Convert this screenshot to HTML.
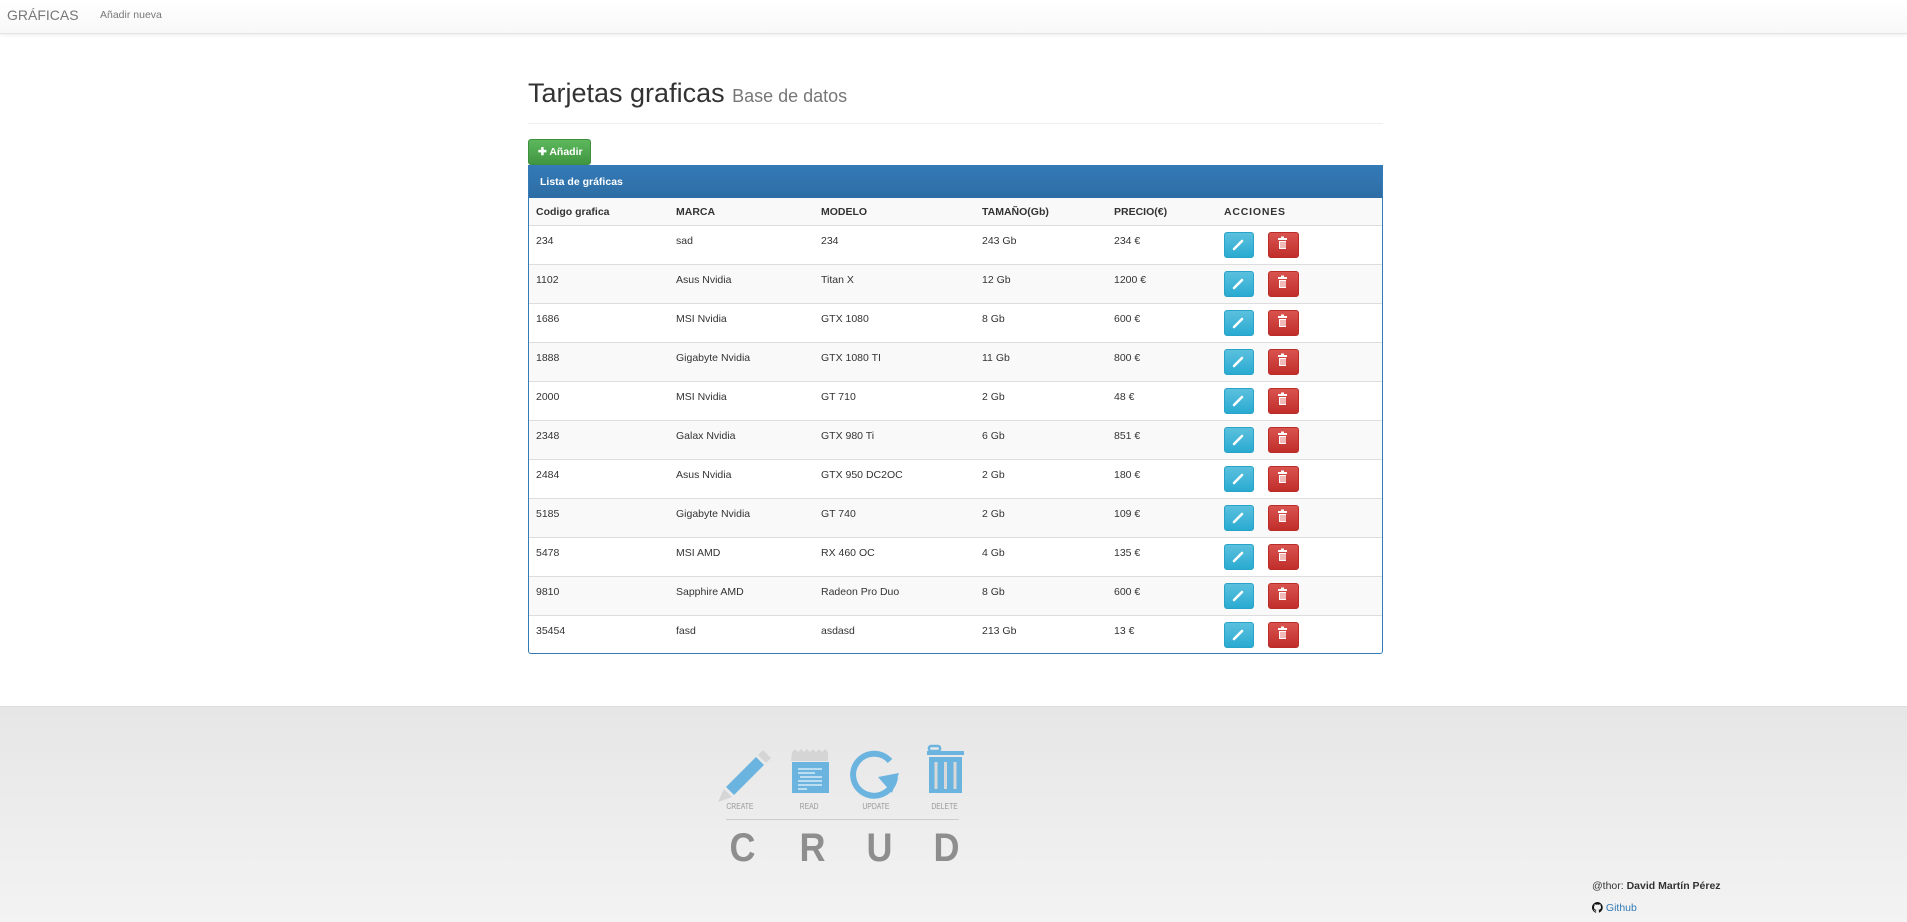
<!DOCTYPE html>
<html><head><meta charset="utf-8">
<style>
*{box-sizing:border-box;margin:0;padding:0}
body{width:1907px;height:922px;overflow:hidden;background:#fff;font-family:"Liberation Sans",Arial,sans-serif;font-size:10.5px;color:#333;position:relative}
.nav{position:absolute;left:0;top:0;width:1907px;height:34px;background:linear-gradient(#fff,#f8f8f8);border-bottom:1px solid #e4e4e4;box-shadow:0 1px 4px rgba(0,0,0,.08)}
.brand{position:absolute;left:7px;top:7px;font-size:14px;color:#777}
.navl{position:absolute;left:100px;top:9px;font-size:10.5px;color:#777}
h1{position:absolute;left:528px;top:78px;font-size:27px;font-weight:normal;color:#333;white-space:nowrap}
h1 small{font-size:18px;color:#777}
.hr{position:absolute;left:528px;top:123px;width:855px;height:1px;background:#eee}
.add{position:absolute;left:528px;top:139px;width:63px;height:26px;border-radius:3px;background:linear-gradient(#5cb85c,#419641);border:1px solid #3e8f3e;color:#fff;font-weight:bold;font-size:10.5px;line-height:24px;padding-left:9px}
.panel{position:absolute;left:528px;top:165px;width:855px;height:489px;border:1px solid #337ab7;border-radius:0 0 3px 3px;overflow:hidden}
.ph{height:32px;background:linear-gradient(#337ab7,#2e6da4);color:#fff;font-weight:bold;padding-left:11px;line-height:32px}
.row{position:relative;height:39px;border-top:1px solid #ddd}
.row.h{height:27px;border-top:none;font-weight:bold;background:#f9f9f9}
.row.g{background:#f9f9f9}
.row span{position:absolute;top:9px}
.row.h span{top:8px}
.b{position:absolute;top:6px;height:26px;border-radius:3px}
.e{left:695px;width:30px;background:linear-gradient(#5bc0de,#2aabd2);border:1px solid #28a4c9}
.d{left:739px;width:31px;background:linear-gradient(#d9534f,#c12e2a);border:1px solid #b92c28}
.foot{position:absolute;left:0;top:706px;width:1907px;height:216px;background:linear-gradient(#e6e6e6,#f3f3f3);border-top:1px solid #ddd}
.lbl{position:absolute;top:802px;font-size:8px;color:#999;transform:scaleX(.85)}
.big{position:absolute;top:826px;font-size:40px;font-weight:bold;color:#8e8e8e;transform:scaleX(.9)}
</style></head><body>
<div class="nav"><div class="brand">GRÁFICAS</div><div class="navl">Añadir nueva</div></div>
<h1>Tarjetas graficas <small>Base de datos</small></h1>
<div class="hr"></div>
<div class="add">✚ Añadir</div>
<div class="panel">
<div class="ph">Lista de gráficas</div>
<div class="row h"><span style="left:7px">Codigo grafica</span><span style="left:147px">MARCA</span><span style="left:292px">MODELO</span><span style="left:453px">TAMAÑO(Gb)</span><span style="left:585px">PRECIO(€)</span><span style="left:695px;letter-spacing:.8px">ACCIONES</span></div>
<div class="row"><span style="left:7px">234</span><span style="left:147px">sad</span><span style="left:292px">234</span><span style="left:453px">243 Gb</span><span style="left:585px">234 €</span><i class="b e"></i><i class="b d"></i></div>
<div class="row g"><span style="left:7px">1102</span><span style="left:147px">Asus Nvidia</span><span style="left:292px">Titan X</span><span style="left:453px">12 Gb</span><span style="left:585px">1200 €</span><i class="b e"></i><i class="b d"></i></div>
<div class="row"><span style="left:7px">1686</span><span style="left:147px">MSI Nvidia</span><span style="left:292px">GTX 1080</span><span style="left:453px">8 Gb</span><span style="left:585px">600 €</span><i class="b e"></i><i class="b d"></i></div>
<div class="row g"><span style="left:7px">1888</span><span style="left:147px">Gigabyte Nvidia</span><span style="left:292px">GTX 1080 TI</span><span style="left:453px">11 Gb</span><span style="left:585px">800 €</span><i class="b e"></i><i class="b d"></i></div>
<div class="row"><span style="left:7px">2000</span><span style="left:147px">MSI Nvidia</span><span style="left:292px">GT 710</span><span style="left:453px">2 Gb</span><span style="left:585px">48 €</span><i class="b e"></i><i class="b d"></i></div>
<div class="row g"><span style="left:7px">2348</span><span style="left:147px">Galax Nvidia</span><span style="left:292px">GTX 980 Ti</span><span style="left:453px">6 Gb</span><span style="left:585px">851 €</span><i class="b e"></i><i class="b d"></i></div>
<div class="row"><span style="left:7px">2484</span><span style="left:147px">Asus Nvidia</span><span style="left:292px">GTX 950 DC2OC</span><span style="left:453px">2 Gb</span><span style="left:585px">180 €</span><i class="b e"></i><i class="b d"></i></div>
<div class="row g"><span style="left:7px">5185</span><span style="left:147px">Gigabyte Nvidia</span><span style="left:292px">GT 740</span><span style="left:453px">2 Gb</span><span style="left:585px">109 €</span><i class="b e"></i><i class="b d"></i></div>
<div class="row"><span style="left:7px">5478</span><span style="left:147px">MSI AMD</span><span style="left:292px">RX 460 OC</span><span style="left:453px">4 Gb</span><span style="left:585px">135 €</span><i class="b e"></i><i class="b d"></i></div>
<div class="row g"><span style="left:7px">9810</span><span style="left:147px">Sapphire AMD</span><span style="left:292px">Radeon Pro Duo</span><span style="left:453px">8 Gb</span><span style="left:585px">600 €</span><i class="b e"></i><i class="b d"></i></div>
<div class="row"><span style="left:7px">35454</span><span style="left:147px">fasd</span><span style="left:292px">asdasd</span><span style="left:453px">213 Gb</span><span style="left:585px">13 €</span><i class="b e"></i><i class="b d"></i></div>
</div>
<svg style="position:absolute;left:0;top:0" width="1907" height="700">
<defs>
<g id="ic">
<path d="M1234 249 L1242 241" stroke="#fff" stroke-width="2.6" stroke-linecap="round"/>
<rect x="1278" y="238" width="9" height="2" fill="#fff"/><rect x="1281" y="236.5" width="3" height="2" fill="#fff"/>
<rect x="1279" y="241" width="7" height="8" fill="#fff"/>
<path d="M1281 242v6M1283 242v6M1285 242v6" stroke="#d9534f" stroke-width=".8"/>
</g></defs>
<use href="#ic"/><use href="#ic" y="39"/><use href="#ic" y="78"/><use href="#ic" y="117"/><use href="#ic" y="156"/><use href="#ic" y="195"/><use href="#ic" y="234"/><use href="#ic" y="273"/><use href="#ic" y="312"/><use href="#ic" y="351"/><use href="#ic" y="390"/>
</svg>
<div class="foot"></div>
<svg style="position:absolute;left:700px;top:735px" width="300" height="70">
<path d="M26 52 L56 22 L64 30 L34 60Z" fill="#6cb4e0"/>
<path d="M58 20 L63 15 L71 23 L66 28Z" fill="#d5d5d5"/>
<path d="M24 54 L32 62 L18 67Z" fill="#d5d5d5"/>
<path d="M92 17 l3 -3 3 3 3 -3 3 3 3 -3 3 3 3 -3 3 3 3 -3 3 3 3 -3 3 3 v9 h-37z" fill="#d5d5d5"/>
<rect x="92" y="27" width="37" height="31" fill="#6cb4e0"/>
<path d="M98 34h24M98 38h17M100 42h22M98 46h24M98 50h24M98 54h9" stroke="#eaf4fb" stroke-width="1.3"/>
<path d="M190 26 A21 21 0 1 0 195 42" stroke="#6cb4e0" stroke-width="6" fill="none"/>
<path d="M178 42 L199 38 L192 58Z" fill="#6cb4e0"/>
<rect x="229" y="11" width="11" height="5" rx="2" fill="none" stroke="#6cb4e0" stroke-width="2.5"/>
<rect x="227" y="16" width="37" height="4" fill="#6cb4e0"/>
<rect x="229" y="22" width="33" height="36" fill="#6cb4e0"/>
<path d="M236 27v27M245.5 27v27M255 27v27" stroke="#d8d8d8" stroke-width="3"/>
</svg>
<div class="lbl" style="left:724px">CREATE</div>
<div class="lbl" style="left:798px">READ</div>
<div class="lbl" style="left:860px">UPDATE</div>
<div class="lbl" style="left:929px">DELETE</div>
<div style="position:absolute;left:726px;top:819px;width:233px;height:1px;background:#ccc"></div>
<div class="big" style="left:728px">C</div>
<div class="big" style="left:798px">R</div>
<div class="big" style="left:865px">U</div>
<div class="big" style="left:932px">D</div>
<div style="position:absolute;left:1592px;top:880px;font-size:10.5px;color:#333">@thor: <b>David Martín Pérez</b></div>
<div style="position:absolute;left:1592px;top:902px;font-size:10.5px;color:#337ab7"><svg width="11" height="11" viewBox="0 0 16 16" style="vertical-align:-2px"><path fill="#111" d="M8 0a8 8 0 0 0-2.5 15.6c.4 0 .5-.2.5-.4v-1.5c-2.2.5-2.7-1-2.7-1-.4-.9-.9-1.2-.9-1.2-.7-.5.1-.5.1-.5.8.1 1.2.8 1.2.8.7 1.3 1.9.9 2.3.7.1-.5.3-.9.5-1.1-1.8-.2-3.6-.9-3.6-4 0-.9.3-1.600.8-2.1-.1-.2-.4-1 .1-2.1 0 0 .7-.2 2.2.8a7.5 7.5 0 0 1 4 0c1.5-1 2.2-.8 2.2-.8.4 1.1.2 1.9.1 2.1.5.6.8 1.3.8 2.1 0 3.1-1.9 3.7-3.6 3.9.3.3.5.8.5 1.5v2.2c0 .2.1.5.6.4A8 8 0 0 0 8 0z"/></svg> Github</div>
</body></html>
